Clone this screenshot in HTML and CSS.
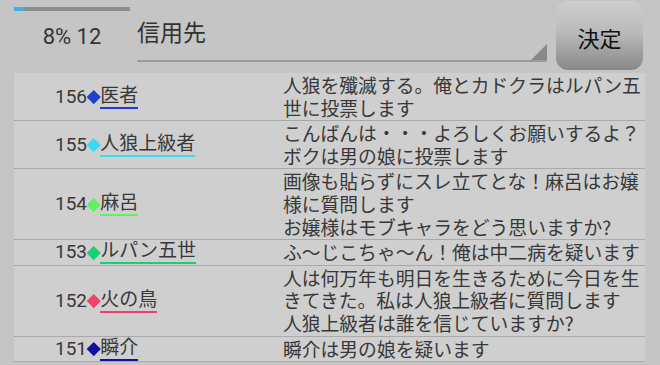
FILE: index.html
```html
<!DOCTYPE html>
<html lang="ja">
<head>
<meta charset="utf-8">
<title>投票</title>
<link rel="stylesheet" href="styles.css">
</head>
<body>
<div class="screen">
  <div class="top">
    <div class="status">
      <div class="progress"><div class="progress-fill" style="width:9%"></div></div>
      <div class="count">8% 12</div>
    </div>
    <div class="select">
      <div class="select-text">信用先</div>
      <div class="select-arrow"></div>
    </div>
    <button class="decide">決定</button>
  </div>
  <div class="list">
    <div class="row">
      <div class="who"><span class="num">156</span><span class="dia c-blue"></span><span class="name u-blue">医者</span></div>
      <div class="msg">人狼を殲滅する。俺とカドクラはルパン五世に投票します</div>
    </div>
    <div class="row">
      <div class="who"><span class="num">155</span><span class="dia c-cyan"></span><span class="name u-cyan">人狼上級者</span></div>
      <div class="msg">こんばんは・・・よろしくお願いするよ？ボクは男の娘に投票します</div>
    </div>
    <div class="row">
      <div class="who"><span class="num">154</span><span class="dia c-lime"></span><span class="name u-lime">麻呂</span></div>
      <div class="msg">画像も貼らずにスレ立てとな！麻呂はお嬢様に質問します<br>お嬢様はモブキャラをどう思いますか?</div>
    </div>
    <div class="row">
      <div class="who"><span class="num">153</span><span class="dia c-green"></span><span class="name u-green">ルパン五世</span></div>
      <div class="msg">ふ～じこちゃ～ん！俺は中二病を疑います</div>
    </div>
    <div class="row">
      <div class="who"><span class="num">152</span><span class="dia c-red"></span><span class="name u-red">火の鳥</span></div>
      <div class="msg">人は何万年も明日を生きるために今日を生きてきた。私は人狼上級者に質問します<br>人狼上級者は誰を信じていますか?</div>
    </div>
    <div class="row">
      <div class="who"><span class="num">151</span><span class="dia c-navy"></span><span class="name u-navy">瞬介</span></div>
      <div class="msg">瞬介は男の娘を疑います</div>
    </div>
  </div>
</div>
</body>
</html>
```
FILE: styles.css
```css
html, body {
  margin: 0;
  padding: 0;
  background: #c5c5c5;
}
body {
  width: 660px;
  height: 365px;
  overflow: hidden;
  font-family: Roboto, "Noto Sans CJK JP", sans-serif;
  color: #383838;
}
.screen {
  display: flex;
  flex-direction: column;
}
.top {
  display: flex;
  height: 73px;
  align-items: flex-start;
}
.status {
  width: 116px;
  margin-left: 14px;
  display: flex;
  flex-direction: column;
  align-items: center;
}
.progress {
  width: 100%;
  height: 4px;
  margin-top: 7px;
  background: #8c8c8c;
}
.progress-fill {
  height: 100%;
  background: #3fb0e6;
}
.count {
  margin-top: 13px;
  font-size: 22px;
  line-height: 26px;
  color: #333;
}
.select {
  width: 410px;
  height: 60px;
  margin-left: 7px;
  border-bottom: 2px solid #9a9a9a;
  display: flex;
  justify-content: space-between;
  align-items: flex-end;
}
.select-text {
  align-self: flex-start;
  padding-top: 18px;
  font-family: "Noto Sans CJK JP", sans-serif;
  font-size: 23px;
  line-height: 27px;
  color: #333;
}
.select-arrow {
  width: 0;
  height: 0;
  border-left: 16px solid transparent;
  border-bottom: 16px solid #888;
}
.decide {
  margin-left: 9px;
  margin-top: 1px;
  width: 87px;
  height: 69px;
  border: none;
  border-radius: 12px;
  background: linear-gradient(#cecece, #bababa 45%, #888888);
  font-family: "Noto Sans CJK JP", sans-serif;
  font-size: 22px;
  line-height: 27px;
  color: #111;
  padding: 3px 0 0;
}
.list {
  margin-left: 14px;
  width: 631px;
  background: #cfcfcf;
}
.row {
  display: flex;
  border-bottom: 1px solid #a9a9a9;
}
.who {
  width: 228px;
  padding-left: 41px;
  display: flex;
  align-items: center;
  font-size: 19px;
  line-height: 22px;
}
.num {
  color: #383838;
}
.dia {
  display: inline-block;
  width: 9.5px;
  height: 9.5px;
  margin: 0 1.8px;
  transform: rotate(45deg);
}
.name {
  display: inline-block;
  border-bottom: 2px solid;
  color: #383838;
}
.msg {
  flex: 1;
  padding: 1px 0;
  font-family: "Noto Sans CJK JP", sans-serif;
  font-size: 18.8px;
  line-height: 22.6px;
}
.c-blue { background: #1f3fcf; }
.c-cyan { background: #3fd8f2; }
.c-lime { background: #5ef35e; }
.c-green { background: #14d173; }
.c-red { background: #f2406e; }
.c-navy { background: #10109e; }
.u-blue { border-color: #1f3fcf; }
.u-cyan { border-color: #3fd8f2; }
.u-lime { border-color: #5ef35e; }
.u-green { border-color: #14d173; }
.u-red { border-color: #f2406e; }
.u-navy { border-color: #10109e; }
```
